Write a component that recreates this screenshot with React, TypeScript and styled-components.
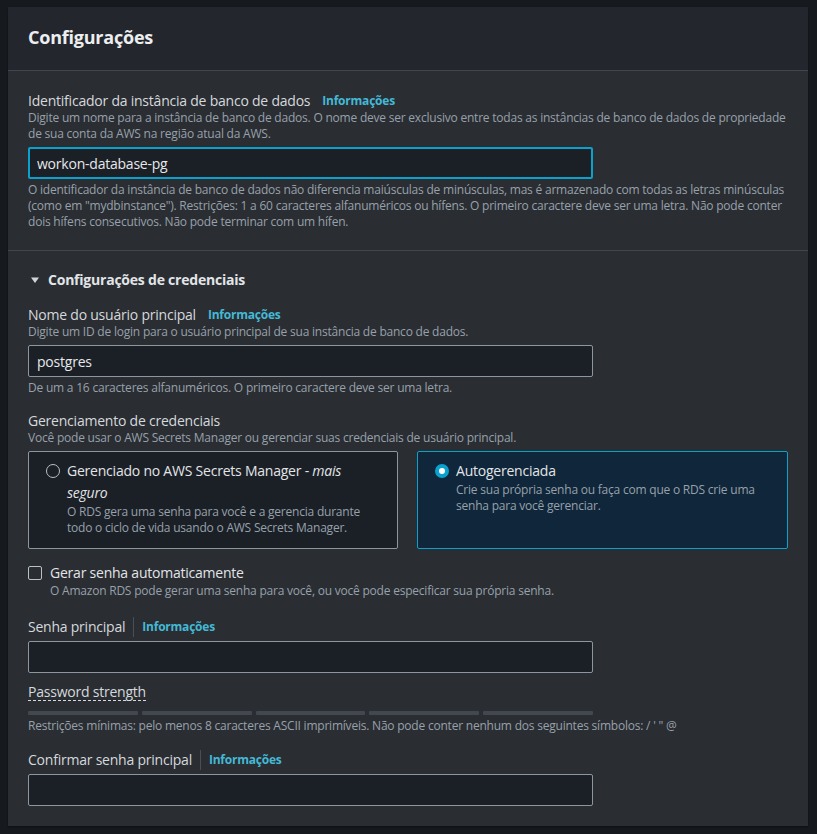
import React from 'react';
import styled, { createGlobalStyle } from 'styled-components';

const GlobalStyle = createGlobalStyle`
    body {
        margin: 0;
        background: #16191e;
        font-family: "Open Sans", "Noto Sans", Arial, sans-serif;
        letter-spacing: -0.014em;
    }
`

const App = () => {
    return (
        <Page>
            <GlobalStyle />
            <Card>
                <Header>
                    <Title>Configurações</Title>
                </Header>

                <Section>
                    <LabelRow>
                        <Label>Identificador da instância de banco de dados</Label>
                        <InfoLink>Informações</InfoLink>
                    </LabelRow>
                    <Description>
                        Digite um nome para a instância de banco de dados. O nome deve ser exclusivo entre todas as instâncias de banco de dados de propriedade de sua conta da AWS na região atual da AWS.
                    </Description>
                    <TextInput $focused defaultValue="workon-database-pg" />
                    <Constraint>
                        O identificador da instância de banco de dados não diferencia maiúsculas de minúsculas, mas é armazenado com todas as letras minúsculas (como em "mydbinstance"). Restrições: 1 a 60 caracteres alfanuméricos ou hífens. O primeiro caractere deve ser uma letra. Não pode conter dois hífens consecutivos. Não pode terminar com um hífen.
                    </Constraint>
                </Section>

                <Section $last>
                    <Expander>
                        <Caret viewBox="0 0 10 10" width="10" height="10">
                            <path d="M1 2.5 L9 2.5 L5 8 Z" fill="#d1d5db" />
                        </Caret>
                        Configurações de credenciais
                    </Expander>

                    <Field $top={16}>
                        <LabelRow>
                            <Label>Nome do usuário principal</Label>
                            <InfoLink>Informações</InfoLink>
                        </LabelRow>
                        <Description>Digite um ID de login para o usuário principal de sua instância de banco de dados.</Description>
                        <TextInput defaultValue="postgres" />
                        <Constraint>De um a 16 caracteres alfanuméricos. O primeiro caractere deve ser uma letra.</Constraint>
                    </Field>

                    <Field $top={16}>
                        <Label>Gerenciamento de credenciais</Label>
                        <Description>Você pode usar o AWS Secrets Manager ou gerenciar suas credenciais de usuário principal.</Description>
                        <Tiles>
                            <Tile>
                                <Radio />
                                <TileText>
                                    <TileTitle>Gerenciado no AWS Secrets Manager - <em>mais seguro</em></TileTitle>
                                    <TileDescription>O RDS gera uma senha para você e a gerencia durante todo o ciclo de vida usando o AWS Secrets Manager.</TileDescription>
                                </TileText>
                            </Tile>
                            <Tile $selected>
                                <Radio $checked />
                                <TileText>
                                    <TileTitle>Autogerenciada</TileTitle>
                                    <TileDescription>Crie sua própria senha ou faça com que o RDS crie uma senha para você gerenciar.</TileDescription>
                                </TileText>
                            </Tile>
                        </Tiles>
                    </Field>

                    <CheckRow>
                        <Checkbox />
                        <div>
                            <CheckLabel>Gerar senha automaticamente</CheckLabel>
                            <Description>O Amazon RDS pode gerar uma senha para você, ou você pode especificar sua própria senha.</Description>
                        </div>
                    </CheckRow>

                    <Field $top={18}>
                        <LabelRow>
                            <Label>Senha principal</Label>
                            <Divider />
                            <InfoLink $tight>Informações</InfoLink>
                        </LabelRow>
                        <TextInput $top={4} type="password" />
                        <Strength>Password strength</Strength>
                        <Meter>
                            {[0, 1, 2, 3, 4].map((i) => <MeterBar key={i} />)}
                        </Meter>
                        <Constraint $top={3}>Restrições mínimas: pelo menos 8 caracteres ASCII imprimíveis. Não pode conter nenhum dos seguintes símbolos: / ' " @</Constraint>
                    </Field>

                    <Field $top={16}>
                        <LabelRow>
                            <Label>Confirmar senha principal</Label>
                            <Divider />
                            <InfoLink $tight>Informações</InfoLink>
                        </LabelRow>
                        <TextInput $top={4} type="password" />
                    </Field>
                </Section>
            </Card>
        </Page>
    );
};

const Page = styled.div`
    padding: 7px 9px 8px 8px;
`
const Card = styled.div`
    background: #2a2d32;
    box-shadow: 0 1px 2px rgba(0, 0, 0, 0.4);
`
const Header = styled.div`
    background: #23272d;
    height: 64px;
    box-sizing: border-box;
    padding: 0 20px 3px;
    display: flex;
    align-items: center;
    border-bottom: 1px solid #41454c;
`
const Title = styled.h2`
    margin: 0;
    font-size: 18px;
    font-weight: 700;
    color: #eceef0;
    line-height: 24px;
`
const Section = styled.div<{ $last?: boolean }>`
    padding: ${(p) => (p.$last ? '19px 20px 20px' : '21px 20px 20px')};
    border-bottom: ${(p) => (p.$last ? 'none' : '1px solid #41454c')};
    display: flex;
    flex-direction: column;
`
const Field = styled.div<{ $top?: number }>`
    display: flex;
    flex-direction: column;
    margin-top: ${(p) => p.$top ?? 0}px;
`
const LabelRow = styled.div`
    display: flex;
    align-items: center;
`
const Label = styled.span`
    font-size: 14px;
    line-height: 18px;
    color: #d5d9dd;
`
const InfoLink = styled.a<{ $tight?: boolean }>`
    margin-left: ${(p) => (p.$tight ? 8 : 12)}px;
    font-size: 12px;
    font-weight: 700;
    color: #44b9d6;
    line-height: 18px;
    cursor: pointer;
`
const Divider = styled.span`
    width: 1px;
    height: 20px;
    background: #4a4f57;
    margin-left: 8px;
`
const Description = styled.div<{ $top?: number }>`
    font-size: 12px;
    line-height: 16px;
    letter-spacing: -0.018em;
    color: #97a1ab;
    margin-top: ${(p) => p.$top ?? 0}px;
`
const Constraint = styled.div<{ $top?: number }>`
    font-size: 12px;
    line-height: 16px;
    letter-spacing: -0.018em;
    color: #97a1ab;
    margin-top: ${(p) => p.$top ?? 3}px;
`
const TextInput = styled.input<{ $focused?: boolean; $top?: number }>`
    box-sizing: border-box;
    width: 565px;
    height: 32px;
    margin-top: ${(p) => p.$top ?? 5}px;
    background: #1b1f26;
    border: ${(p) => (p.$focused ? '2px solid #0aa1cc' : '1px solid #8d969f')};
    border-radius: 2px;
    padding: ${(p) => (p.$focused ? '0 7px' : '0 8px')};
    font-family: inherit;
    letter-spacing: inherit;
    font-size: 14px;
    color: #e6e8ea;
    outline: none;
`
const Expander = styled.div`
    display: flex;
    align-items: center;
    gap: 8px;
    font-size: 14px;
    font-weight: 700;
    line-height: 20px;
    color: #e2e5e8;
    padding-left: 2px;
`
const Caret = styled.svg`
    flex-shrink: 0;
`
const Tiles = styled.div`
    display: grid;
    grid-template-columns: 370px 371px;
    column-gap: 19px;
    margin-top: 5px;
`
const Tile = styled.div<{ $selected?: boolean }>`
    box-sizing: border-box;
    height: 98px;
    display: flex;
    align-items: flex-start;
    gap: 7px;
    padding: 8px 18px 0 17px;
    background: ${(p) => (p.$selected ? '#10263a' : '#1b1f26')};
    border: 1px solid ${(p) => (p.$selected ? '#0aa1cc' : '#8d969f')};
    border-radius: 2px;
`
const Radio = styled.span<{ $checked?: boolean }>`
    box-sizing: border-box;
    flex-shrink: 0;
    width: 14px;
    height: 14px;
    margin-top: 4px;
    border-radius: 50%;
    border: ${(p) => (p.$checked ? '4.5px solid #0aa1cc' : '1.5px solid #b8c0c8')};
    background: ${(p) => (p.$checked ? '#ffffff' : 'transparent')};
`
const TileText = styled.div`
    display: flex;
    flex-direction: column;
`
const TileTitle = styled.div`
    font-size: 14px;
    line-height: 22px;
    color: #e2e5e8;
`
const TileDescription = styled.div`
    font-size: 12px;
    line-height: 16px;
    letter-spacing: -0.018em;
    color: #97a1ab;
`
const CheckRow = styled.div`
    display: flex;
    align-items: flex-start;
    gap: 8px;
    margin-top: 14px;
`
const Checkbox = styled.span`
    box-sizing: border-box;
    flex-shrink: 0;
    width: 14px;
    height: 14px;
    margin-top: 3px;
    border: 1.5px solid #b8c0c8;
    border-radius: 2px;
`
const CheckLabel = styled.div`
    font-size: 14px;
    line-height: 20px;
    color: #e2e5e8;
`
const Strength = styled.span`
    align-self: flex-start;
    margin-top: 10px;
    font-size: 14px;
    line-height: 17px;
    color: #d5d9dd;
    border-bottom: 1px dashed #d5d9dd;
`
const Meter = styled.div`
    display: grid;
    grid-template-columns: repeat(5, 1fr);
    column-gap: 4px;
    width: 565px;
    margin-top: 10px;
`
const MeterBar = styled.div`
    height: 4px;
    background: #424750;
    border-radius: 1px;
`

export default App;
